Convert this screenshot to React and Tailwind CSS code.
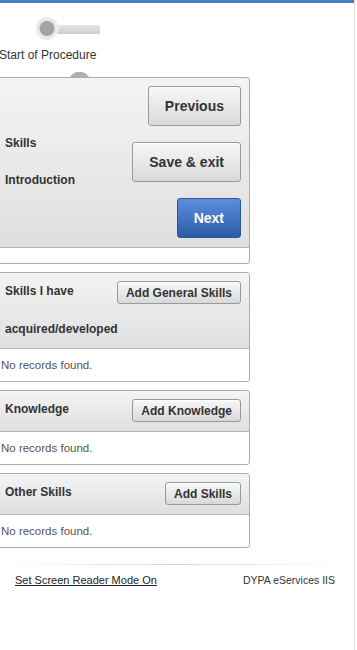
const font = { fontFamily: '"Liberation Sans", Arial, sans-serif' };

const GrayButton = ({ children, big }) => (
  <button
    className={
      big
        ? 'h-10 px-4 rounded-[3px] border border-[#9a9a9a] bg-gradient-to-b from-[#f8f8f8] to-[#d9d9d9] text-[14px] font-bold text-[#333] shadow-[inset_0_1px_0_#fff]'
        : 'h-[23px] px-2 rounded-[3px] border border-[#9a9a9a] bg-gradient-to-b from-[#f8f8f8] to-[#d9d9d9] text-[12px] font-bold text-[#333] leading-none shadow-[inset_0_1px_0_#fff]'
    }
  >
    {children}
  </button>
);

const Section = ({ label, action }) => (
  <div className="-ml-[10px] w-[260px] border border-[#acacac] rounded-[3px] bg-white">
    <div className="flex items-start justify-between pl-[14px] pr-[8px] bg-gradient-to-b from-[#f4f4f4] to-[#dfdfdf] border-b border-[#b5b5b5] rounded-t-[3px]">
      <div className="text-[12px] font-bold text-[#333] leading-[37.5px] max-w-[105px]">{label}</div>
      <div className="flex pt-2 pb-[9px] shrink-0">
        <GrayButton>{action}</GrayButton>
      </div>
    </div>
    <div className="pl-[10px] py-[9px] text-[11.5px] leading-[14px] text-[#555]">No records found.</div>
  </div>
);

export default function App() {
  return (
    <div style={font} className="w-[355px] min-h-[650px] border-r border-[#e2e2e2] bg-white overflow-hidden">
      <div className="h-[3px] bg-[#4a7dc0]" />

      {/* step indicator */}
      <svg width="110" height="40" className="block">
        <defs>
          <linearGradient id="bar" x1="0" y1="0" x2="0" y2="1">
            <stop offset="0" stopColor="#e6e6e6" />
            <stop offset="1" stopColor="#cfcfcf" />
          </linearGradient>
          <radialGradient id="halo">
            <stop offset="0.6" stopColor="#e4e4e4" />
            <stop offset="1" stopColor="#f0f0f0" />
          </radialGradient>
        </defs>
        <rect x="55" y="22" width="45" height="9" fill="url(#bar)" />
        <circle cx="47" cy="25.5" r="11.5" fill="url(#halo)" />
        <circle cx="47" cy="25.5" r="7.5" fill="#a3a3a3" />
      </svg>
      <div className="-ml-px mt-[5px] text-[12px] leading-[14px] text-[#333]">Start of Procedure</div>
      <svg width="110" height="15" className="block">
        <circle cx="79.5" cy="20.7" r="11" fill="#b0b0b0" />
      </svg>

      {/* main panel */}
      <div className="-ml-[10px] w-[260px] border border-[#acacac] rounded-[3px] bg-white">
        <div className="flex items-center justify-between pl-[14px] pr-[8px] pt-2 pb-[9px] bg-gradient-to-b from-[#f4f4f4] to-[#dfdfdf] border-b border-[#b5b5b5] rounded-t-[3px]">
          <div className="text-[12px] font-bold text-[#333] leading-[37px]">
            <div>Skills</div>
            <div>Introduction</div>
          </div>
          <div className="flex flex-col items-end gap-4">
            <GrayButton big>Previous</GrayButton>
            <GrayButton big>Save &amp; exit</GrayButton>
            <button className="h-10 px-4 rounded-[3px] border border-[#2c5795] bg-gradient-to-b from-[#5b8fdc] to-[#2b5ba6] text-[14px] font-bold text-white">
              Next
            </button>
          </div>
        </div>
        <div className="h-[15px]" />
      </div>

      <div className="mt-2 flex flex-col gap-2">
        <Section label="Skills I have acquired/developed" action="Add General Skills" />
        <Section label="Knowledge" action="Add Knowledge" />
        <Section label="Other Skills" action="Add Skills" />
      </div>

      {/* footer */}
      <div className="mx-[15px] mt-4 w-[320px]">
        <div className="h-px bg-gradient-to-r from-transparent via-[#d6d6d6] to-transparent shadow-[0_2px_6px_rgba(0,0,0,0.06)]" />
        <div className="flex justify-between items-center pt-[8px]">
          <a href="#" className="text-[11px] leading-[14px] text-[#222] underline">Set Screen Reader Mode On</a>
          <span className="text-[10.5px] leading-[14px] text-[#333]">DYPA eServices IIS</span>
        </div>
      </div>
    </div>
  );
}
